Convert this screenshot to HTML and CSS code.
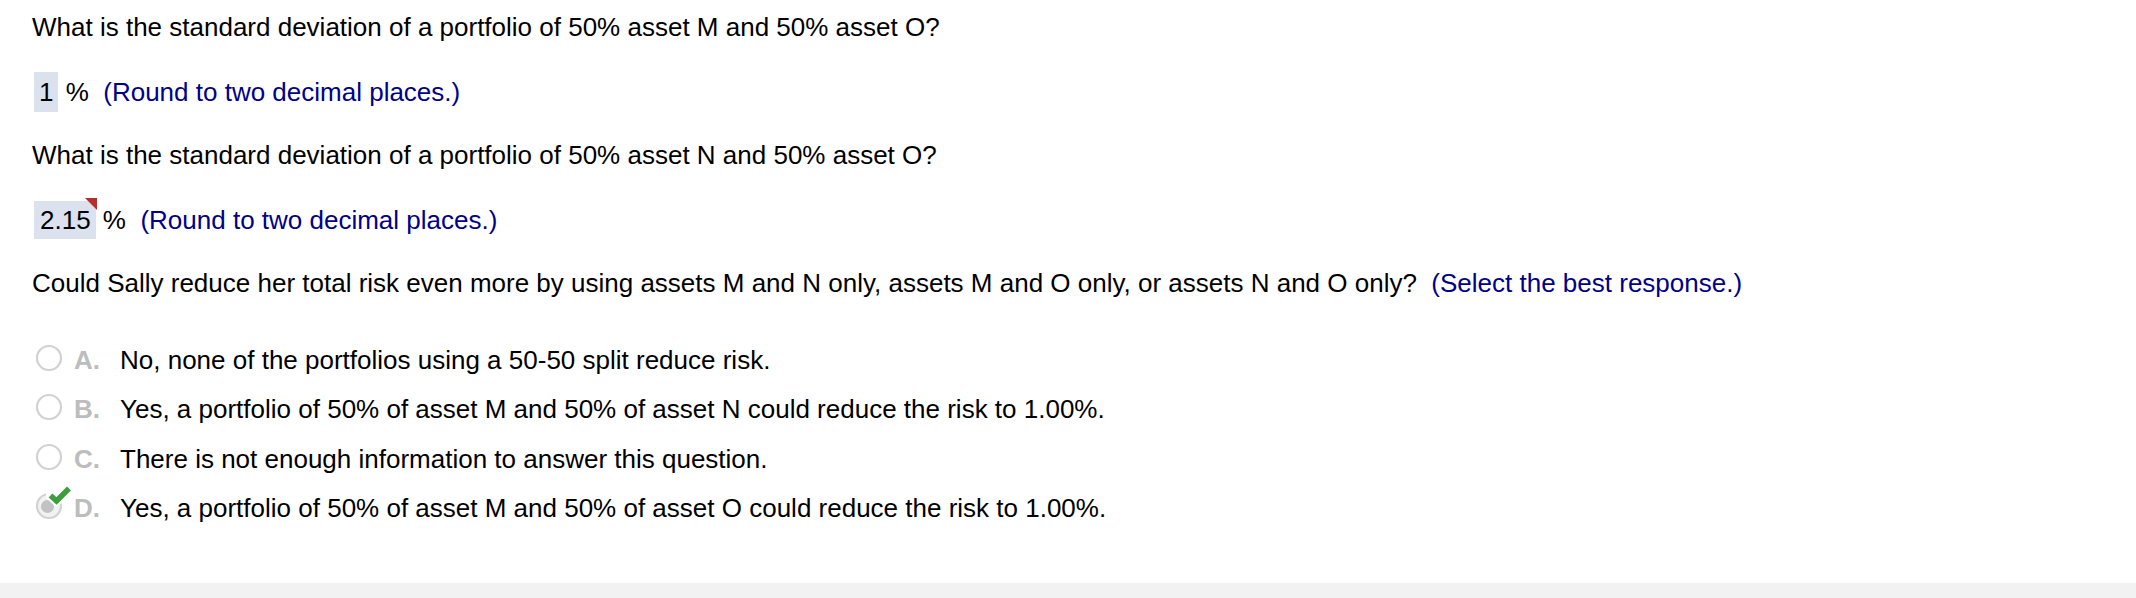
FILE: index.html
```html
<!DOCTYPE html>
<html>
<head>
<meta charset="utf-8">
<link rel="stylesheet" href="styles.css">
</head>
<body>
<div class="page">
  <div class="content">
    <p class="q q1">What is the standard deviation of a portfolio of 50% asset M and 50% asset O?</p>
    <p class="ans ans1"><span class="box">1</span> %&nbsp; <span class="hint">(Round to two decimal places.)</span></p>
    <p class="q q2">What is the standard deviation of a portfolio of 50% asset N and 50% asset O?</p>
    <p class="ans ans2"><span class="box box-flag">2.15</span> %&nbsp; <span class="hint">(Round to two decimal places.)</span></p>
    <p class="q q3">Could Sally reduce her total risk even more by using assets M and N only, assets M and O only, or assets N and O only?&nbsp; <span class="hint">(Select the best response.)</span></p>
    <div class="options">
      <div class="opt">
        <span class="radio"><svg width="28" height="28" viewBox="0 0 28 28"><circle cx="14" cy="14" r="12" fill="#fff" stroke="#d2d2d2" stroke-width="2.2"/></svg></span>
        <span class="letter">A.</span>
        <span class="otext">No, none of the portfolios using a 50-50 split reduce risk.</span>
      </div>
      <div class="opt">
        <span class="radio"><svg width="28" height="28" viewBox="0 0 28 28"><circle cx="14" cy="14" r="12" fill="#fff" stroke="#d2d2d2" stroke-width="2.2"/></svg></span>
        <span class="letter">B.</span>
        <span class="otext">Yes, a portfolio of 50% of asset M and 50% of asset N could reduce the risk to 1.00%.</span>
      </div>
      <div class="opt">
        <span class="radio"><svg width="28" height="28" viewBox="0 0 28 28"><circle cx="14" cy="14" r="12" fill="#fff" stroke="#d2d2d2" stroke-width="2.2"/></svg></span>
        <span class="letter">C.</span>
        <span class="otext">There is not enough information to answer this question.</span>
      </div>
      <div class="opt">
        <span class="radio radio-sel"><svg width="28" height="28" viewBox="0 0 28 28"><circle cx="14" cy="14" r="12" fill="#f2f2f2" stroke="#d2d2d2" stroke-width="2.2"/><circle cx="12.5" cy="14.5" r="6.5" fill="#c2c2c2"/></svg><svg class="check" width="28" height="24" viewBox="0 0 28 24"><path d="M4 11.5 L10.5 17.5 L23.5 4.5" fill="none" stroke="#ffffff" stroke-width="9" stroke-linecap="round" stroke-linejoin="round"/><path d="M4.5 11.5 L10.5 17 L23 4.5" fill="none" stroke="#3c9e3c" stroke-width="5.5" stroke-linecap="butt" stroke-linejoin="miter"/></svg></span>
        <span class="letter">D.</span>
        <span class="otext">Yes, a portfolio of 50% of asset M and 50% of asset O could reduce the risk to 1.00%.</span>
      </div>
    </div>
  </div>
  <div class="footer"></div>
</div>
</body>
</html>
```

FILE: styles.css
```css
html, body {
  margin: 0;
  padding: 0;
  background: #ffffff;
}

body {
  font-family: "Liberation Sans", Arial, sans-serif;
  font-size: 26px;
  color: #000000;
}

.page {
  width: 2136px;
  height: 598px;
  display: flex;
  flex-direction: column;
  overflow: hidden;
}

.content {
  flex: 1;
  padding-left: 32px;
  padding-top: 12px;
}

p {
  margin: 0;
}

.q {
  line-height: 30px;
}

.q2 { margin-top: 28px; }
.q3 { margin-top: 29px; }

.ans1 {
  margin-top: 30px;
  line-height: 40px;
  height: 40px;
}

.ans2 {
  margin-top: 31px;
  line-height: 38px;
  height: 38px;
}

.box {
  display: inline-block;
  background: #dbe2ee;
  padding: 0 6px 0 6px;
  margin-left: 2px;
  position: relative;
}

.ans1 .box { padding: 0 5px 0 5px; }

.box-flag { padding: 0 5px 0 6px; }

.box-flag::after {
  content: "";
  position: absolute;
  right: -1px;
  top: -3px;
  width: 0;
  height: 0;
  border-top: 12px solid #b3302b;
  border-left: 12px solid transparent;
}

.hint {
  color: #000088;
}

.options {
  margin-top: 37px;
  display: grid;
  grid-auto-rows: 49.5px;
}

.opt {
  display: flex;
  align-items: center;
  line-height: 30px;
}

.radio {
  width: 28px;
  height: 28px;
  margin-left: 3px;
  margin-top: -4px;
  position: relative;
  flex: none;
}

.radio svg {
  display: block;
}

.radio .check {
  position: absolute;
  left: 11px;
  top: -8px;
}

.letter {
  width: 46px;
  margin-left: 11px;
  font-weight: bold;
  color: #bdbdbd;
  flex: none;
}

.footer {
  height: 15px;
  background: #f2f2f2;
  flex: none;
}
```
